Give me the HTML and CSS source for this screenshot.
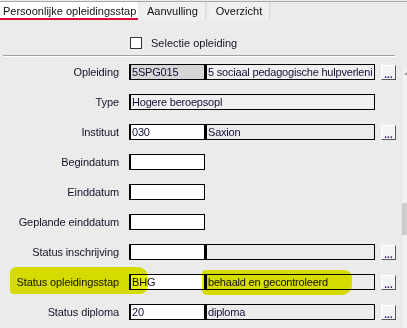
FILE: index.html
```html
<!DOCTYPE html>
<html lang="nl">
<head>
    <meta charset="UTF-8">
    <title>Opleidingsstap</title>
    <link rel="stylesheet" href="styles.css">
</head>
<body>
    <!-- Tab strip -->
    <div class="tabs">
        <div class="tab active">Persoonlijke opleidingsstap</div>
        <div class="tab">Aanvulling</div>
        <div class="tab">Overzicht</div>
    </div>

    <div class="selectie">
        <span class="checkbox"></span>
        <span>Selectie opleiding</span>
    </div>
    <div class="groove"></div>

    <div class="main">
        <div class="form">
            <div class="row">
                <label>Opleiding</label>
                <div class="field code disabled">5SPG015</div>
                <div class="field desc light">5 sociaal pedagogische hulpverleni</div>
                <button class="dots">...</button>
            </div>
            <div class="row">
                <label>Type</label>
                <div class="field wide light">Hogere beroepsopl</div>
            </div>
            <div class="row">
                <label>Instituut</label>
                <div class="field code">030</div>
                <div class="field desc grey">Saxion</div>
                <button class="dots">...</button>
            </div>
            <div class="row">
                <label>Begindatum</label>
                <div class="field code"></div>
            </div>
            <div class="row">
                <label>Einddatum</label>
                <div class="field code"></div>
            </div>
            <div class="row">
                <label>Geplande einddatum</label>
                <div class="field code"></div>
            </div>
            <div class="row">
                <label>Status inschrijving</label>
                <div class="field code"></div>
                <div class="field desc grey"></div>
                <button class="dots">...</button>
            </div>
            <div class="row">
                <label>Status opleidingsstap</label>
                <div class="field code">BHG</div>
                <div class="field desc grey">behaald en gecontroleerd</div>
                <button class="dots">...</button>
            </div>
            <div class="row">
                <label>Status diploma</label>
                <div class="field code">20</div>
                <div class="field desc grey">diploma</div>
                <button class="dots">...</button>
            </div>
        </div>
        <div class="scrollbar">
            <span class="arrow"></span>
            <span class="thumb"></span>
        </div>
    </div>

    <!-- Highlighter marks drawn over the screenshot -->
    <div class="marker marker-label"></div>
    <div class="marker marker-desc"></div>
</body>
</html>
```

FILE: styles.css
```css
/* General page styles */
body {
    margin: 0;
    background-color: #ebebeb;
    font-family: "Liberation Sans", Arial, sans-serif;
    font-size: 11px;
    color: #15152a;
    width: 407px;
    height: 328px;
    overflow: hidden;
    position: relative;
}

/* Tabs */
.tabs {
    display: flex;
    margin-top: 1px;
    height: 18px;
    border-top: 1px solid #a8a8a8;
    margin-bottom: 17px;
}

.tab {
    padding: 3px 7px 0 7px;
    background-color: #f0f0f0;
    border-right: 1px solid #d9d9d9;
    margin-right: 3px;
    color: #111;
    white-space: nowrap;
}

.tab.active {
    background-color: #fff;
    width: 128px;
    padding-left: 3px;
    padding-right: 7px;
    margin-right: 2px;
    border-right: none;
    border-bottom: 2px solid #e2003c;
    height: 13px;
}

/* Selectie checkbox */
.selectie {
    display: flex;
    align-items: center;
    height: 12px;
    padding-left: 130px;
    margin-bottom: 6px;
}

.checkbox {
    width: 10px;
    height: 10px;
    border: 1px solid #333;
    background-color: #fff;
    margin-right: 9px;
}

.groove {
    margin-left: 3px;
    width: 392px;
    border-top: 1px solid #a0a0a0;
    border-bottom: 1px solid #fff;
}

/* Form rows */
.main {
    display: flex;
}

.form {
    flex-grow: 1;
}

.row {
    display: flex;
    align-items: center;
    height: 30px;
}

.row label {
    width: 119px;
    margin-right: 10px;
    text-align: right;
    letter-spacing: -0.1px;
}

.field {
    box-sizing: border-box;
    height: 16px;
    border: 1px solid #000;
    border-left-width: 2px;
    background-color: #fff;
    padding-left: 1px;
    line-height: 14px;
    letter-spacing: -0.2px;
    white-space: nowrap;
    overflow: hidden;
    color: #10103a;
}

.code {
    width: 76px;
}

.desc {
    width: 170px;
}

.wide {
    width: 246px;
}

.disabled {
    background-color: #d6d6d6;
}

.light {
    background-color: #f0f0f0;
}

.grey {
    background-color: #ececec;
}

.dots {
    box-sizing: border-box;
    width: 15px;
    height: 15px;
    margin-left: 6px;
    padding: 5px 0 0 0;
    background-color: #f4f4f4;
    border: 1px solid;
    border-color: #fff #555 #555 #fff;
    font-family: "Liberation Sans", Arial, sans-serif;
    font-size: 10px;
    font-weight: bold;
    color: #3a1a70;
    line-height: 6px;
    overflow: hidden;
}

/* Scrollbar */
.scrollbar {
    width: 5px;
    margin-top: 10px;
    background-color: #f0f0f0;
    border-left: 1px solid #e2e2e2;
}

.arrow {
    display: block;
    margin: 5px 0 0 2px;
    width: 0;
    height: 0;
    border-left: 3px solid transparent;
    border-right: 3px solid transparent;
    border-bottom: 3px solid #9a9a9a;
}

.thumb {
    display: block;
    margin-top: 128px;
    height: 32px;
    background-color: #cdcdcd;
}

/* Yellow highlighter */
.marker {
    position: absolute;
    background-color: #e8ee00;
    mix-blend-mode: multiply;
}

.marker-label {
    left: 10px;
    top: 267px;
    width: 138px;
    height: 27px;
    border-radius: 6px 10px 8px 4px;
}

.marker-desc {
    left: 202px;
    top: 270px;
    width: 150px;
    height: 25px;
    border-radius: 4px 8px 10px 5px;
}
```
